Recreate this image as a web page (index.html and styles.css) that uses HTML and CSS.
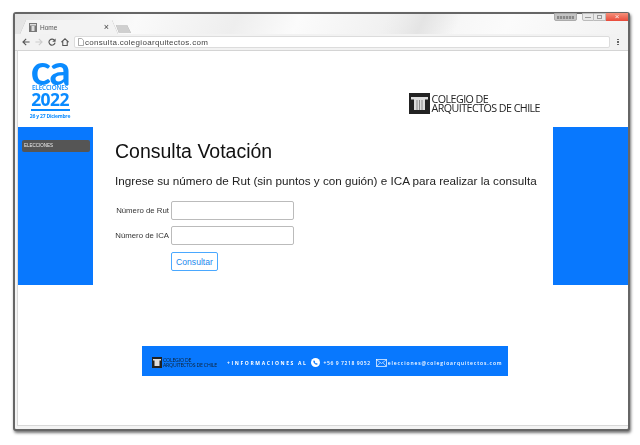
FILE: index.html
```html
<!DOCTYPE html>
<html lang="es">
<head>
<meta charset="utf-8">
<title>Home</title>
<link rel="stylesheet" href="styles.css">
</head>
<body>
<div class="window">
  <div class="titlebar">
    <div class="tabs">
      <div class="tab">
        <svg class="favicon" width="8" height="9" viewBox="0 0 8 9"><rect width="8" height="9" fill="#777"/><rect x="1" y="1" width="6" height="1.5" fill="#ddd"/><rect x="2.5" y="3" width="3" height="5" fill="#ddd"/></svg>
        <span class="tab-title">Home</span>
        <span class="tab-close">×</span>
      </div>
      <div class="newtab"></div>
    </div>
    <div class="controls">
      <div class="ctl-user"><span class="ctl-user-mark"></span></div>
      <div class="ctl-group">
        <div class="ctl"><span class="ctl-min"></span></div>
        <div class="ctl"><span class="ctl-max"></span></div>
        <div class="ctl ctl-close">×</div>
      </div>
    </div>
  </div>
  <div class="toolbar">
    <svg class="nav" width="8" height="8" viewBox="0 0 10 10"><path d="M9.500 5H1.500M5.200 1 1.200 5l4 4" fill="none" stroke="#555" stroke-width="1.400"/></svg>
    <svg class="nav" width="8" height="8" viewBox="0 0 10 10"><path d="M.5 5h8M4.800 1l4 4-4 4" fill="none" stroke="#ccc" stroke-width="1.400"/></svg>
    <svg class="nav" width="8" height="8" viewBox="0 0 10 10"><path d="M8.300 3.200A3.800 3.800 0 1 0 8.800 5.800" fill="none" stroke="#555" stroke-width="1.400"/><path d="M9.500 .5v4.200H5.300z" fill="#555"/></svg>
    <svg class="nav" width="8" height="8" viewBox="0 0 10 10"><path d="M.5 5.200 5 1l4.500 4.200M2.200 4.200V9.300h5.600V4.200" fill="none" stroke="#555" stroke-width="1.300"/></svg>
    <div class="address">
      <svg width="6" height="8" viewBox="0 0 6 8"><path d="M.5.5h3.200L5.500 2.300v5.200h-5z" fill="#fff" stroke="#888" stroke-width=".7"/></svg>
      <span class="url">consulta.colegioarquitectos.com</span>
    </div>
    <div class="menu"><i></i><i></i><i></i></div>
  </div>
  <div class="viewport">
    <header class="site-header">
      <div class="brand">
        <div class="brand-ca">ca</div>
        <div class="brand-elec">ELECCIONES</div>
        <div class="brand-year">2022</div>
        <div class="brand-rule"></div>
        <div class="brand-date">26 y 27 Diciembre</div>
      </div>
      <div class="colegio">
        <svg class="colegio-icon" width="21" height="21" viewBox="0 0 21 21"><rect width="21" height="21" fill="#222"/><path d="M2 4h17v2.500h-3V17H5V6.500H2z" fill="#ddd"/><path d="M8 7v10M10.500 7v10M13 7v10" stroke="#777" stroke-width=".8"/></svg>
        <div class="colegio-text">COLEGIO DE<br>ARQUITECTOS DE CHILE</div>
      </div>
    </header>
    <div class="main-row">
      <aside class="sidebar">
        <div class="side-item">ELECCIONES</div>
      </aside>
      <main class="content">
        <h1 class="title">Consulta Votación</h1>
        <p class="lead">Ingrese su número de Rut (sin puntos y con guión) e ICA para realizar la consulta</p>
        <form class="form">
          <label class="field"><span class="field-label">Número de Rut</span><input class="input" type="text"></label>
          <label class="field"><span class="field-label">Número de ICA</span><input class="input" type="text"></label>
          <button class="submit" type="button">Consultar</button>
        </form>
      </main>
      <aside class="band"></aside>
    </div>
    <footer class="banner">
      <svg width="10" height="11" viewBox="0 0 10 11"><rect width="10" height="11" fill="#222"/><path d="M1 2h8v1.500H7.500V9h-5V3.500H1z" fill="#ddd"/></svg>
      <div class="banner-org">COLEGIO DE<br>ARQUITECTOS DE CHILE</div>
      <span class="banner-info">+INFORMACIONES AL</span>
      <svg class="banner-phone" width="9" height="9" viewBox="0 0 9 9"><circle cx="4.500" cy="4.500" r="4.500" fill="#fff"/><path d="M3 2.200 2.300 3c0 2 1.700 3.700 3.700 3.700l.8-.8-1.200-1-.6.500c-.6-.3-1-.7-1.300-1.300l.5-.6z" fill="#0a7aff"/></svg>
      <span class="banner-tel">+56 9 7218 9052</span>
      <svg class="banner-mail" width="11" height="8" viewBox="0 0 11 8"><rect x=".4" y=".4" width="10.200" height="7.200" fill="none" stroke="#fff" stroke-width=".7"/><path d="M.5.700 5.500 4.500l5-3.800M.6 7.400l3.600-3.800M10.400 7.400 6.800 3.600" fill="none" stroke="#fff" stroke-width=".6"/></svg>
      <span class="banner-mailtext">elecciones@colegioarquitectos.com</span>
    </footer>
  </div>
</div>
</body>
</html>
```
FILE: styles.css
```css
* { box-sizing: border-box; }
html, body { margin: 0; padding: 0; background: #fff; }
body { width: 640px; height: 445px; overflow: hidden; padding: 12px 0 0 13px; font-family: "Liberation Sans", Arial, sans-serif; }

.window {
  width: 617px; height: 419px;
  border: 2px solid #666;
  border-radius: 3px;
  box-shadow: 1px 2px 3px rgba(0,0,0,.55);
  background: #f3f3f3;
  display: flex; flex-direction: column;
  filter: blur(.4px);
}

.titlebar {
  height: 20px; flex: none;
  display: flex; justify-content: space-between; align-items: flex-start;
  padding-left: 5px;
  background:
    linear-gradient(115deg, transparent 60%, #e4e4e4 66%, transparent 72%),
    linear-gradient(115deg, #e2e2e2 0%, #fafafa 20%, #eee 36%, #fbfbfb 46%, #f1f1f1 60%, #fbfbfb 80%, #f2f2f2 100%);
}
.tabs { display: flex; align-items: flex-end; height: 20px; filter: drop-shadow(0 0 .6px #999); }
.tab {
  width: 98px; height: 14px;
  background: #f3f3f3;
  clip-path: polygon(0 100%, 6px 0, 92px 0, 100% 100%);
  display: flex; align-items: center;
  padding: 0 9px;
}
.favicon { flex: none; }
.tab-title { margin-left: 3px; font-size: 6.500px; color: #555; flex: 1; }
.tab-close { font-size: 9px; color: #444; line-height: 1; }
.newtab {
  width: 15px; height: 8px; margin: 0 0 1px -2px;
  background: #cfcfcf;
  clip-path: polygon(0 0, 11px 0, 100% 100%, 3px 100%);
}
.controls { display: flex; align-items: flex-start; gap: 5px; }
.ctl-user {
  width: 23px; height: 8px; margin-top: -1px;
  border: 1px solid #aaa; border-radius: 0 0 2px 2px;
  background: #c4c4c4;
  display: flex; align-items: center; justify-content: center;
}
.ctl-user-mark { width: 17px; height: 3px; background: repeating-linear-gradient(90deg, #888 0 2px, #b4b4b4 2px 3px); }
.ctl-group { display: flex; height: 8px; margin-top: -1px; }
.ctl {
  width: 12px; height: 8px;
  border: 1px solid #bbb; border-left: 0;
  background: #e8e8e8;
  display: flex; align-items: center; justify-content: center;
}
.ctl:first-child { border-left: 1px solid #bbb; border-radius: 0 0 0 2px; }
.ctl-min { width: 6px; height: 2px; border: 1px solid #999; border-width: 0 0 1px; }
.ctl-max { width: 5px; height: 4px; border: 1px solid #999; }
.ctl-close {
  width: 22px; border: 0;
  background: linear-gradient(#f4907a, #e84a3a);
  color: #f8f0f0; font-size: 8px; line-height: 1;
}

.toolbar {
  height: 17px; flex: none;
  display: flex; align-items: center; gap: 5px;
  padding: 0 0 0 7px;
  background: #f2f2f2;
  border-bottom: 1px solid #d4d4d4;
}
.nav { flex: none; }
.address {
  width: 536px; height: 12px;
  background: #fff;
  border: 1px solid #dcdcdc; border-radius: 2px;
  display: flex; align-items: center; gap: 1px;
  padding-left: 3px;
}
.url { font-size: 8px; letter-spacing: .3px; color: #444; white-space: nowrap; }
.menu { display: flex; flex-direction: column; gap: 1px; margin-left: 2px; }
.menu i { display: block; width: 1.500px; height: 1.500px; background: #666; }

.viewport {
  flex: 1; background: #fff;
  margin-left: 2px;
  border-left: 1px solid #d8d8d8;
  border-bottom: 1px solid #d8d8d8;
  margin-bottom: 3px;
  display: flex; flex-direction: column;
}

.site-header {
  height: 76px; flex: none;
  display: flex; justify-content: space-between; align-items: flex-start;
  padding: 7px 88px 0 9px;
}
.brand { width: 46px; color: #0a8bff; display: flex; flex-direction: column; align-items: center; font-family: "Open Sans", sans-serif; }
.brand-ca { font: 700 42px/22px "Lato", sans-serif; height: 22px; letter-spacing: -1.500px; }
.brand-elec { font-size: 6.300px; line-height: 7px; font-weight: 600; letter-spacing: -.1px; margin-top: 4px; }
.brand-year { font-size: 17.500px; line-height: 13px; font-weight: 700; letter-spacing: -.6px; margin-top: 2px; }
.brand-rule { width: 39px; height: 2px; background: #0a8bff; margin-top: 3px; }
.brand-date { font-size: 5px; line-height: 7px; font-weight: 700; letter-spacing: -.2px; margin-top: 2px; white-space: nowrap; }

.colegio { display: flex; align-items: center; gap: 2px; margin-top: 35px; }
.colegio-icon { flex: none; }
.colegio-text { font: 10.700px/9px "Open Sans", sans-serif; letter-spacing: -.55px; color: #222; white-space: nowrap; padding-top: 1px; }

.main-row { display: flex; height: 158px; flex: none; }
.sidebar { width: 75px; flex: none; background: #0878fe; padding: 13px 3px 0 4px; }
.side-item {
  height: 12px; background: #555; border-radius: 2px;
  color: #eee; font-size: 4.500px; line-height: 12px; padding-left: 2px;
}
.band { width: 75px; flex: none; background: #0878fe; }
.content { flex: 1; min-width: 0; padding: 13px 0 0 22px; color: #111; }
.title { margin: 0; font-size: 19.500px; line-height: 23px; font-weight: 400; }
.lead { margin: 10px 0 0; font-size: 11.700px; line-height: 15px; color: #222; white-space: nowrap; }
.form { display: flex; flex-direction: column; align-items: flex-start; margin-top: 13px; }
.field { display: flex; align-items: center; height: 19px; margin-bottom: 6px; }
.field-label { width: 56px; font-size: 7.800px; text-align: right; color: #333; padding-right: 2px; white-space: nowrap; }
.input { width: 123px; height: 19px; border: 1px solid #bbb; border-radius: 2px; background: #fff; padding: 0; margin: 0; }
.submit {
  width: 47px; height: 19px; margin: 1px 0 0 56px; padding: 0;
  background: #fff; border: 1px solid #4aa8ff; border-radius: 2px;
  color: #1a88ee; font: 8.600px "Liberation Sans", Arial, sans-serif;
}

.banner {
  width: 366px; height: 30px; flex: none;
  margin: 61px 0 0 124px;
  background: #0878fe;
  display: flex; align-items: center;
  padding: 3px 0 0 10px;
  color: #fff;
}
.banner-org { font: 5.200px/5px "Open Sans", sans-serif; letter-spacing: -.2px; color: #123; margin-left: 1px; white-space: nowrap; }
.banner-info { font: 700 5px "Open Sans", sans-serif; letter-spacing: 1.630px; margin-left: 10px; white-space: nowrap; }
.banner-phone { margin-left: 4px; flex: none; }
.banner-tel { font: 600 5px "Open Sans", sans-serif; letter-spacing: .6px; margin-left: 3px; white-space: nowrap; }
.banner-mail { margin-left: 5px; flex: none; }
.banner-mailtext { font: 600 5px "Open Sans", sans-serif; letter-spacing: .88px; margin-left: 1px; white-space: nowrap; }
```
